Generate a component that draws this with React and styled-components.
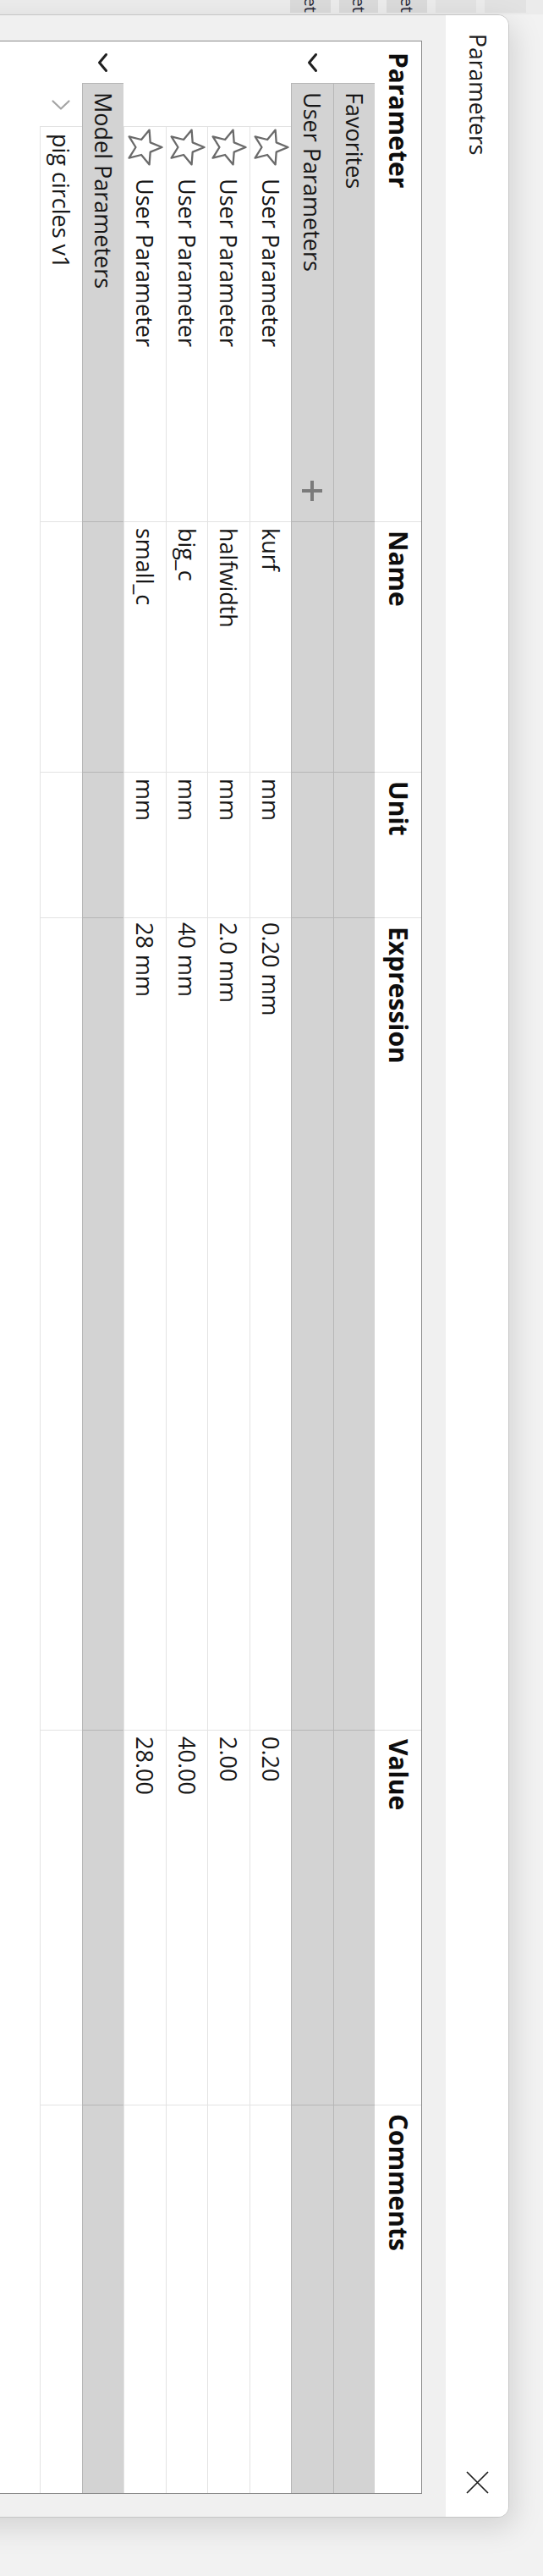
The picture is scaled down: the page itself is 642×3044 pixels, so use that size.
import styled, { createGlobalStyle } from 'styled-components';

// The whole dialog is laid out in a vertical-rl writing mode, so the
// original window reads top-to-bottom, rotated a quarter turn clockwise.

const GROUP_BG = '#d3d3d3';
const GROUP_LINE = '#b6b6b6';
const CELL_LINE = '#e3e3e3';

const COLS = [568, 296, 172, 960, 443, null];

const GlobalStyle = createGlobalStyle`
  html, body {
    margin: 0;
    padding: 0;
    overflow: hidden;
    background: #f1f1f1;
  }
  #root {
    width: 642px;
    height: 3044px;
  }
`;

const Screen = styled.div`
  writing-mode: vertical-rl;
  width: 642px;
  height: 3044px;
  overflow: hidden;
  display: flex;
  background: #f2f2f2;
  font-family: "Open Sans", "Noto Sans", "DejaVu Sans", sans-serif;
  color: #161616;
`;

const SideRail = styled.div`
  flex: none;
  inline-size: 17px;
  background: #ebebeb;
  display: flex;
  flex-direction: column;
  gap: 10px;
  padding-block-start: 20px;
  box-sizing: border-box;
`;

const Tab = styled.div`
  flex: none;
  block-size: ${({ $size }) => $size}px;
  inline-size: 15px;
  background: ${({ $dim }) => ($dim ? '#e2e2e2' : '#dadada')};
  display: flex;
  justify-content: flex-end;
  align-items: center;
  overflow: hidden;
  font-size: 20px;
  line-height: 1;
  color: #2a2a3a;
  white-space: nowrap;
`;

const Stage = styled.div`
  flex: 1;
  padding-block-start: 40px;
  box-sizing: border-box;
`;

const Dialog = styled.div`
  inline-size: 2958px;
  block-size: 760px;
  box-sizing: border-box;
  background: #f0f0f0;
  border: 1px solid #c6c6c6;
  border-start-start-radius: 13px;
  border-start-end-radius: 13px;
  box-shadow: 6px 12px 34px rgba(0, 0, 0, 0.13);
  display: flex;
  flex-direction: column;
  overflow: hidden;
`;

const TitleBar = styled.div`
  flex: none;
  block-size: 74px;
  background: #ffffff;
  display: flex;
  align-items: center;
  padding-inline: 22px 27px;
`;

const Title = styled.span`
  font-size: 26.5px;
  line-height: 1.2;
  color: #1b1b1b;
`;

const CloseButton = styled.span`
  margin-inline-start: auto;
  display: flex;
  align-items: center;
  justify-content: center;
  cursor: pointer;
`;

const DialogBody = styled.div`
  flex: 1;
  padding-block-start: 28px;
  padding-inline: 30px 27px;
`;

const Table = styled.div`
  block-size: 100%;
  box-sizing: border-box;
  border: 1px solid #8b8b8b;
  background: #ffffff;
  display: flex;
  flex-direction: column;
`;

const Row = styled.div`
  flex: none;
  display: flex;
  block-size: ${({ $h }) => $h}px;
`;

const Cell = styled.div`
  box-sizing: border-box;
  flex: ${({ $w }) => ($w ? 'none' : '1')};
  inline-size: ${({ $w }) => ($w ? `${$w}px` : 'auto')};
  display: flex;
  align-items: center;
  padding-inline-start: ${({ $pad }) => $pad ?? 7}px;
  background: ${({ $group }) => ($group ? GROUP_BG : '#ffffff')};
  border-block-end: 1px solid ${({ $group }) => ($group ? GROUP_LINE : CELL_LINE)};
  border-inline-end: ${({ $last, $group }) =>
    $last ? 'none' : `1px solid ${$group ? GROUP_LINE : CELL_LINE}`};
  border-inline-start: ${({ $lead, $group }) =>
    $lead ? `1px solid ${$group ? GROUP_LINE : CELL_LINE}` : 'none'};
  font-size: 27px;
  line-height: 1.2;
  white-space: nowrap;
  overflow: hidden;
`;

const HeaderCell = styled.div`
  box-sizing: border-box;
  flex: ${({ $w }) => ($w ? 'none' : '1')};
  inline-size: ${({ $w }) => ($w ? `${$w}px` : 'auto')};
  display: flex;
  align-items: center;
  padding-inline-start: ${({ $pad }) => $pad ?? 10}px;
  border-inline-end: ${({ $last }) => ($last ? 'none' : `1px solid ${CELL_LINE}`)};
  font-size: 30px;
  font-weight: 700;
  line-height: 1.2;
  color: #0d0d0d;
  white-space: nowrap;
`;

const Spacer = styled.div`
  flex: none;
  inline-size: ${({ $size }) => $size}px;
  background: #ffffff;
`;

const Expander = styled.div`
  flex: none;
  inline-size: ${({ $size }) => $size}px;
  background: #ffffff;
  display: flex;
  align-items: center;
  justify-content: center;
`;

const StarSlot = styled.span`
  flex: none;
  inline-size: 48px;
  display: flex;
  align-items: center;
  justify-content: center;
  margin-inline-start: -7px;
`;

const Label = styled.span`
  margin-inline-start: ${({ $gap }) => $gap ?? 0}px;
`;

const AddButton = styled.span`
  margin-inline-start: auto;
  margin-inline-end: 23px;
  display: flex;
  align-items: center;
  justify-content: center;
`;

const Turned = styled.svg`
  display: block;
  flex: none;
  transform: rotate(90deg);
`;

const Chevron = ({ open }) =>
  open ? (
    <Turned width="24" height="24" viewBox="0 0 24 24">
      <path d="M2.5 7.5 L12 15.5 L21.5 7.5" fill="none" stroke="#202020" strokeWidth="3" strokeLinecap="round" strokeLinejoin="round" />
    </Turned>
  ) : (
    <Turned width="24" height="24" viewBox="0 0 24 24">
      <path d="M7.5 2.5 L16.5 12 L7.5 21.5" fill="none" stroke="#a4a4a4" strokeWidth="2.2" strokeLinecap="round" strokeLinejoin="round" />
    </Turned>
  );

const StarIcon = () => (
  <Turned width="48" height="48" viewBox="0 0 48 48">
    <path
      d="M24 3.5 L29.6 17.3 L44.4 18.4 L33 27.9 L36.6 42.4 L24 34.5 L11.4 42.4 L15 27.9 L3.6 18.4 L18.4 17.3 Z"
      fill="none"
      stroke="#6a6a6a"
      strokeWidth="2.3"
      strokeLinejoin="round"
    />
  </Turned>
);

const PlusIcon = () => (
  <svg width="26" height="26" viewBox="0 0 26 26">
    <path d="M13 1 V25 M1 13 H25" stroke="#7b7b7b" strokeWidth="4" />
  </svg>
);

const CloseIcon = () => (
  <svg width="27" height="27" viewBox="0 0 27 27">
    <path d="M1 1 L26 26 M26 1 L1 26" stroke="#1c1c1c" strokeWidth="1.7" />
  </svg>
);

const headers = ['Parameter', 'Name', 'Unit', 'Expression', 'Value', 'Comments'];

const userParams = [
  { name: 'kurf', unit: 'mm', expr: '0.20 mm', value: '0.20' },
  { name: 'halfwidth', unit: 'mm', expr: '2.0 mm', value: '2.00' },
  { name: 'big_c', unit: 'mm', expr: '40 mm', value: '40.00' },
  { name: 'small_c', unit: 'mm', expr: '28 mm', value: '28.00' },
];

const ROW_H = 49.5;

function GroupRow({ label, open, addable }) {
  return (
    <Row $h={ROW_H}>
      <Expander $size={49}>{open && <Chevron open />}</Expander>
      <Cell $group $lead $w={COLS[0] - 49} $pad={10}>
        <Label>{label}</Label>
        {addable && (
          <AddButton>
            <PlusIcon />
          </AddButton>
        )}
      </Cell>
      {COLS.slice(1).map((w, i) => (
        <Cell key={i} $group $w={w} $last={!w} />
      ))}
    </Row>
  );
}

function ParamRow({ p }) {
  return (
    <Row $h={ROW_H}>
      <Spacer $size={100} />
      <Cell $lead $w={COLS[0] - 100}>
        <StarSlot>
          <StarIcon />
        </StarSlot>
        <Label $gap={13}>User Parameter</Label>
      </Cell>
      <Cell $w={COLS[1]}>{p.name}</Cell>
      <Cell $w={COLS[2]}>{p.unit}</Cell>
      <Cell $w={COLS[3]} $pad={5}>{p.expr}</Cell>
      <Cell $w={COLS[4]}>{p.value}</Cell>
      <Cell $last />
    </Row>
  );
}

function ComponentRow({ label }) {
  return (
    <Row $h={ROW_H}>
      <Spacer $size={49} />
      <Expander $size={51}>
        <Chevron />
      </Expander>
      <Cell $lead $w={COLS[0] - 100} $pad={8}>
        {label}
      </Cell>
      {COLS.slice(1).map((w, i) => (
        <Cell key={i} $w={w} $last={!w} />
      ))}
    </Row>
  );
}

export default function App() {
  return (
    <>
      <GlobalStyle />
      <Screen>
        <SideRail>
          <Tab $size={49} $dim />
          <Tab $size={48} $dim />
          <Tab $size={48}>Offset</Tab>
          <Tab $size={46}>Sheet</Tab>
          <Tab $size={48}>Sheet</Tab>
        </SideRail>
        <Stage>
          <Dialog>
            <TitleBar>
              <Title>Parameters</Title>
              <CloseButton aria-label="Close">
                <CloseIcon />
              </CloseButton>
            </TitleBar>
            <DialogBody>
              <Table>
                <Row $h={55}>
                  {headers.map((h, i) => (
                    <HeaderCell key={h} $w={COLS[i]} $last={!COLS[i]} $pad={i === 0 ? 13 : 10}>
                      {h}
                    </HeaderCell>
                  ))}
                </Row>
                <GroupRow label="Favorites" />
                <GroupRow label="User Parameters" open addable />
                {userParams.map((p) => (
                  <ParamRow key={p.name} p={p} />
                ))}
                <GroupRow label="Model Parameters" open />
                <ComponentRow label="pig circles v1" />
              </Table>
            </DialogBody>
          </Dialog>
        </Stage>
      </Screen>
    </>
  );
}
